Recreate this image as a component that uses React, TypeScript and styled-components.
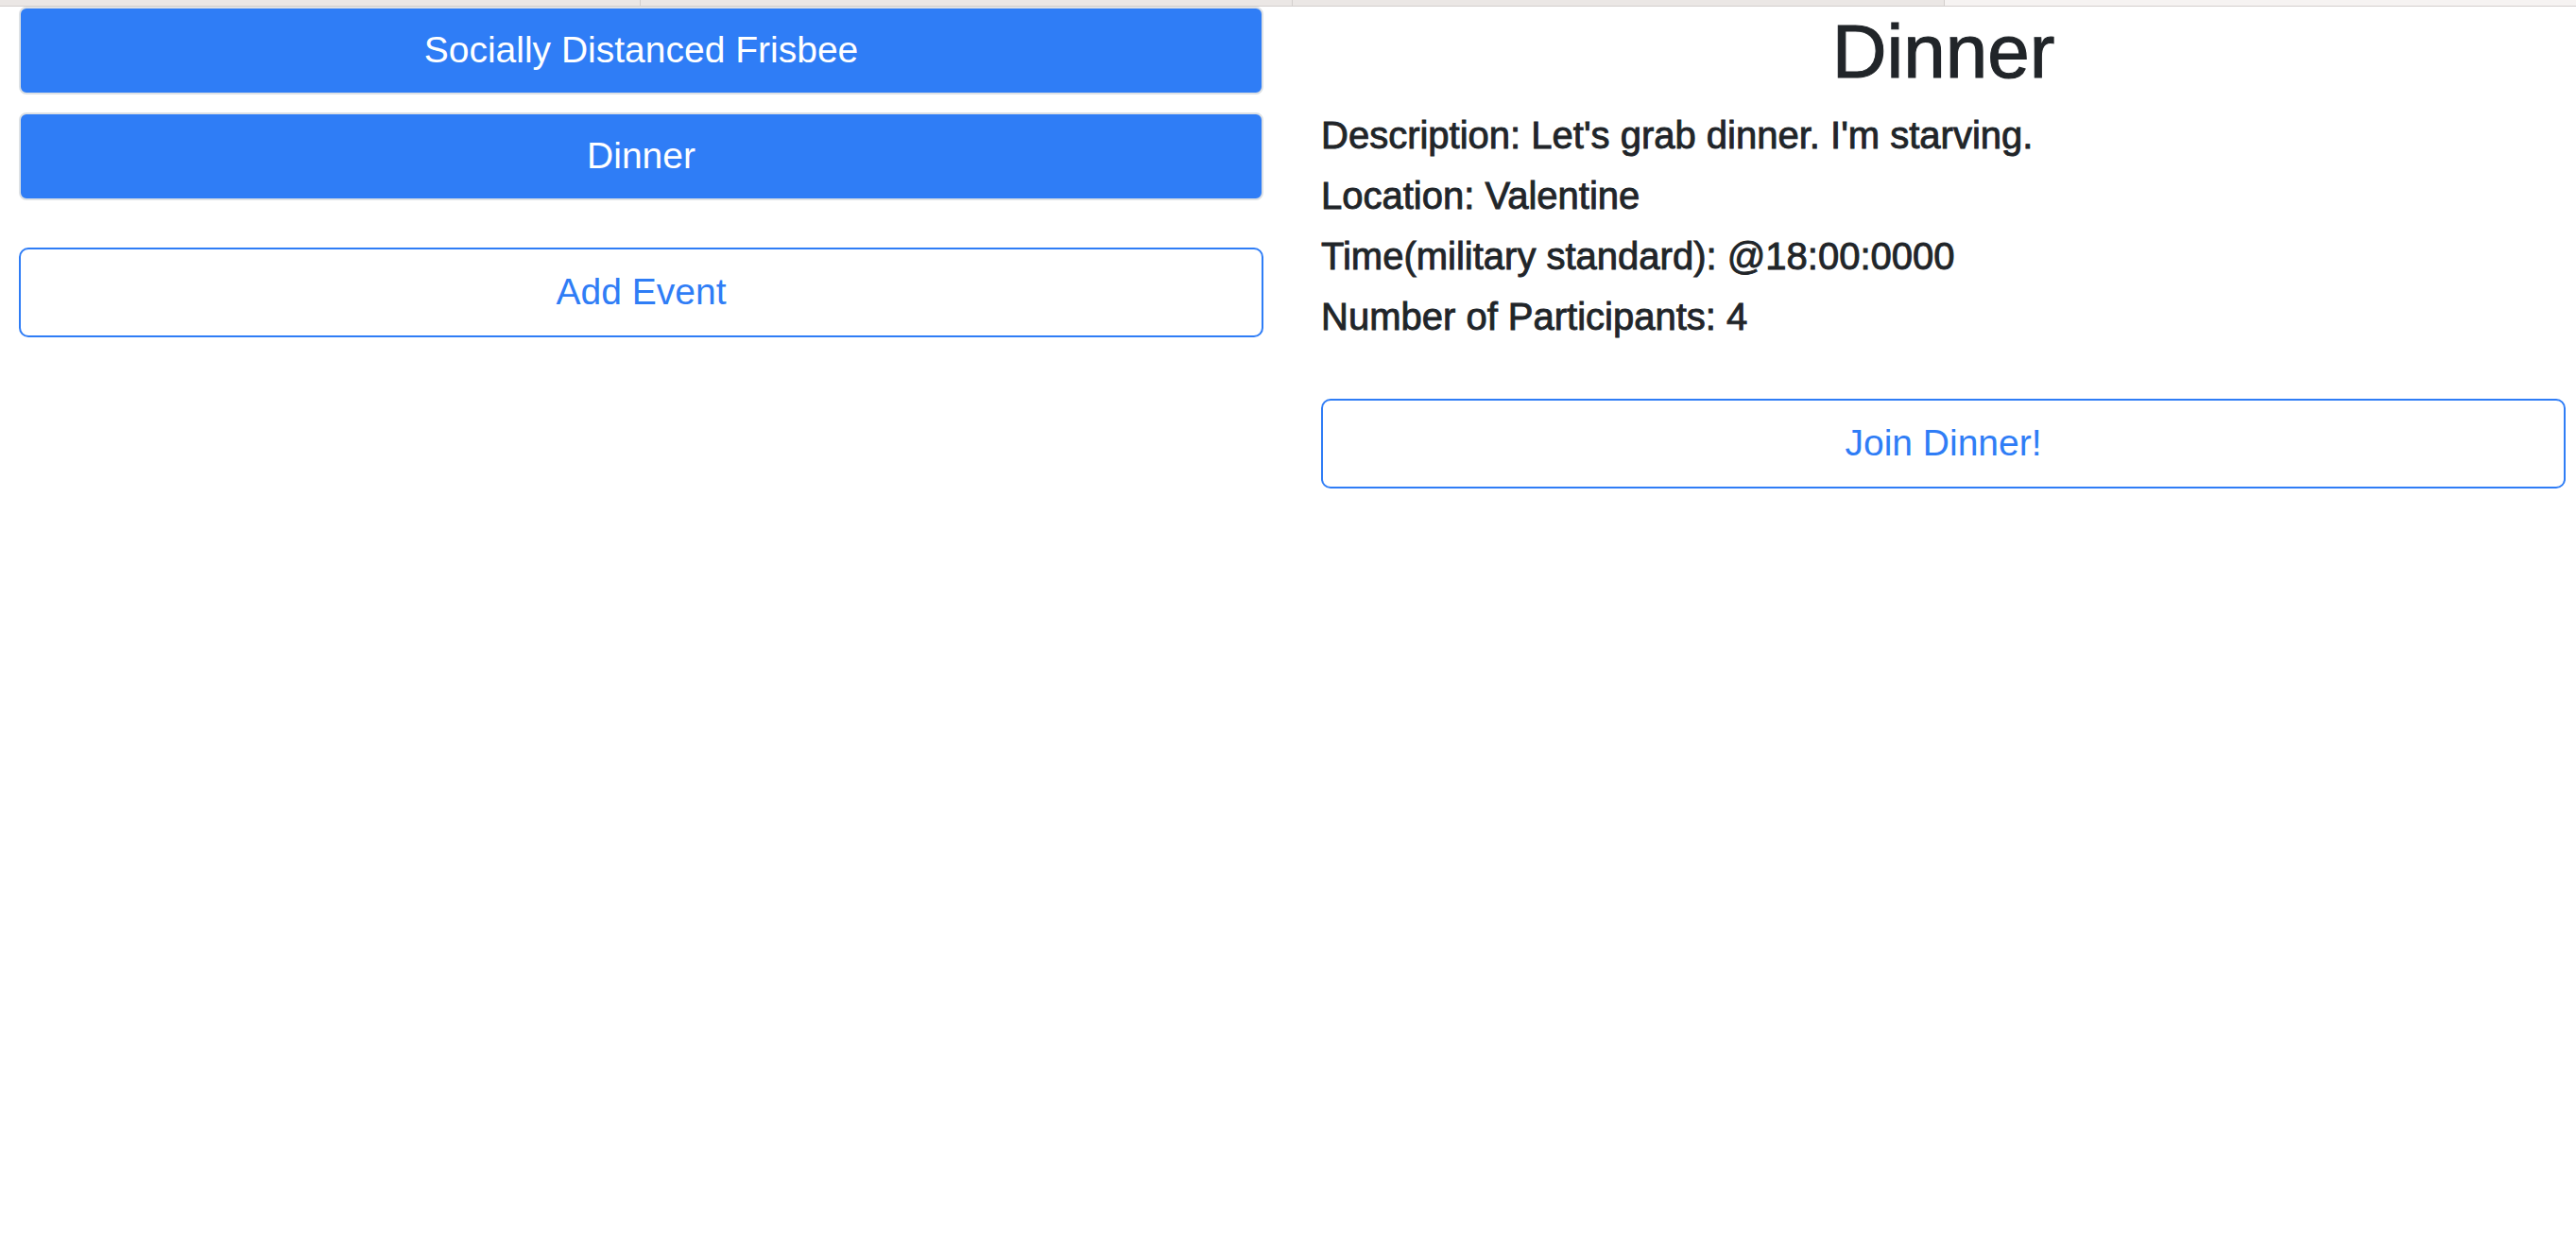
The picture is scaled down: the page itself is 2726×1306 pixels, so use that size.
import React from 'react';
import styled, { createGlobalStyle } from 'styled-components';

const GlobalStyle = createGlobalStyle`
  html, body {
    margin: 0;
    padding: 0;
    background: #fff;
  }
  body {
    font-family: "Liberation Sans", Arial, sans-serif;
    color: #212529;
  }
`;

const TabStrip = styled.div`
  display: flex;
  height: 6px;
  border-bottom: 1px solid #d3cfcd;
`;

const TabSegment = styled.div<{ $width?: number; $light?: boolean }>`
  flex: ${p => (p.$width ? `0 0 ${p.$width}px` : '1')};
  background: ${p => (p.$light ? '#f6f3f2' : '#ebe7e5')};
  border-right: ${p => (p.$width ? '1px solid #d3cfcd' : 'none')};
`;

const Row = styled.div`
  display: grid;
  grid-template-columns: 1317px 1317px;
  column-gap: 61px;
  padding: 0 11px 0 20px;
`;

const Column = styled.div`
  display: flex;
  flex-direction: column;
`;

const EventList = styled.div`
  display: flex;
  flex-direction: column;
  gap: 19px;
  margin-bottom: 50px;
`;

const Button = styled.button<{ $filled?: boolean }>`
  display: block;
  width: 100%;
  box-sizing: border-box;
  height: ${p => (p.$filled ? '93px' : '95px')};
  font-family: "Liberation Sans", Arial, sans-serif;
  font-size: 39px;
  font-weight: 400;
  line-height: 1.5;
  text-align: center;
  cursor: pointer;
  border-radius: ${p => (p.$filled ? '8px' : '10px')};
  border: 2px solid ${p => (p.$filled ? '#dde1e5' : '#2f7df6')};
  background: ${p => (p.$filled ? '#2f7df6' : '#fff')};
  color: ${p => (p.$filled ? '#fff' : '#2f7df6')};
  padding: 0 32px;
`;

const Title = styled.h1`
  margin: 0 0 16px;
  font-size: 80px;
  font-weight: 500;
  line-height: 96px;
  text-align: center;
  -webkit-text-stroke: 1.1px #212529;
`;

const Detail = styled.h5`
  margin: 0 0 16px;
  font-size: 40px;
  font-weight: 500;
  line-height: 48px;
  -webkit-text-stroke: 0.9px #212529;
`;

const Spacer = styled.div`
  height: 47px;
`;

const events = ['Socially Distanced Frisbee', 'Dinner'];

const selected = {
  name: 'Dinner',
  description: "Let's grab dinner. I'm starving.",
  location: 'Valentine',
  time: '@18:00:0000',
  participants: 4,
};

const App = () => {
  return (
    <>
      <GlobalStyle />
      <TabStrip>
        <TabSegment $width={677} />
        <TabSegment $width={689} />
        <TabSegment $width={689} />
        <TabSegment $light />
      </TabStrip>
      <Row>
        <Column>
          <EventList>
            {events.map(name => (
              <Button $filled type="button" key={name}>
                {name}
              </Button>
            ))}
          </EventList>
          <Button type="button">Add Event</Button>
        </Column>
        <Column>
          <Title>{selected.name}</Title>
          <Detail>Description: {selected.description}</Detail>
          <Detail>Location: {selected.location}</Detail>
          <Detail>Time(military standard): {selected.time}</Detail>
          <Detail>Number of Participants: {selected.participants}</Detail>
          <Spacer />
          <Button type="button">Join {selected.name}!</Button>
        </Column>
      </Row>
    </>
  );
};

export default App;
